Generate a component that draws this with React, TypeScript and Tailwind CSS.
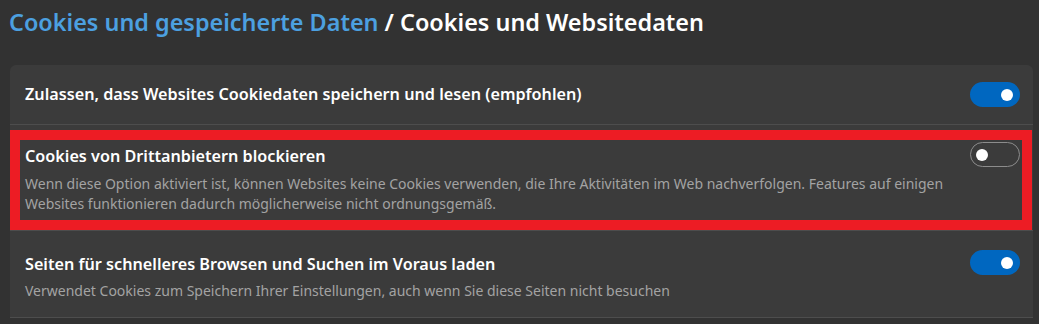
const font = { fontFamily: '"Noto Sans", "Open Sans", sans-serif' };

function Toggle({ on }: { on: boolean }) {
  if (on) {
    return (
      <div className="flex h-[25px] w-[50px] shrink-0 items-center justify-end rounded-full bg-[#0067c0] pr-[7px]">
        <div className="h-[12px] w-[12px] rounded-full bg-white" />
      </div>
    );
  }
  return (
    <div className="flex h-[25px] w-[50px] shrink-0 items-center rounded-full border border-[#8c8c8c] pl-[5px]">
      <div className="h-[12px] w-[12px] rounded-full bg-white" />
    </div>
  );
}

export default function App() {
  return (
    <div className="h-[324px] w-[1039px] overflow-hidden bg-[#323232]" style={font}>
      <h1 className="pl-[9px] pt-[6px] text-[23.4px] font-semibold leading-[32px] text-white">
        <span className="text-[#4ca0e0]">Cookies und gespeicherte Daten</span> / Cookies und Websitedaten
      </h1>

      <div className="ml-[10px] mr-[6px] mt-[27px] rounded-t-[6px] bg-[#3b3b3b]">
        {/* row 1 */}
        <div className="flex h-[60px] items-center justify-between border-b border-[#4d4d4d] pl-[15px] pr-[13px]">
          <span className="text-[16.2px] font-semibold text-white">
            Zulassen, dass Websites Cookiedaten speichern und lesen (empfohlen)
          </span>
          <Toggle on />
        </div>

        {/* row 2 - highlighted */}
        <div className="border-b border-[#4d4d4d] pr-px pt-[5px]">
          <div className="flex justify-between border-[10px] border-[#ed1c24] pb-[6px] pl-[5px] pr-[2px] pt-[2px]">
            <div className="pt-[3px]">
              <div className="text-[16.2px] font-semibold leading-[22px] text-white">
                Cookies von Drittanbietern blockieren
              </div>
              <p className="mt-[7px] text-[14px] leading-[20px] text-[#a3a3a3]">
                Wenn diese Option aktiviert ist, können Websites keine Cookies verwenden, die Ihre Aktivitäten im Web nachverfolgen. Features auf einigen Websites funktionieren dadurch möglicherweise nicht ordnungsgemäß.
              </p>
            </div>
            <div className="ml-[20px]">
              <Toggle on={false} />
            </div>
          </div>
        </div>

        {/* row 3 */}
        <div className="flex h-[87px] justify-between border-b border-[#4d4d4d] pl-[15px] pr-[13px] pt-[19px]">
          <div className="pt-[3px]">
            <div className="text-[16.2px] font-semibold leading-[22px] text-white">
              Seiten für schnelleres Browsen und Suchen im Voraus laden
            </div>
            <p className="mt-[6px] text-[14px] leading-[20px] text-[#a3a3a3]">
              Verwendet Cookies zum Speichern Ihrer Einstellungen, auch wenn Sie diese Seiten nicht besuchen
            </p>
          </div>
          <Toggle on />
        </div>
      </div>
    </div>
  );
}
